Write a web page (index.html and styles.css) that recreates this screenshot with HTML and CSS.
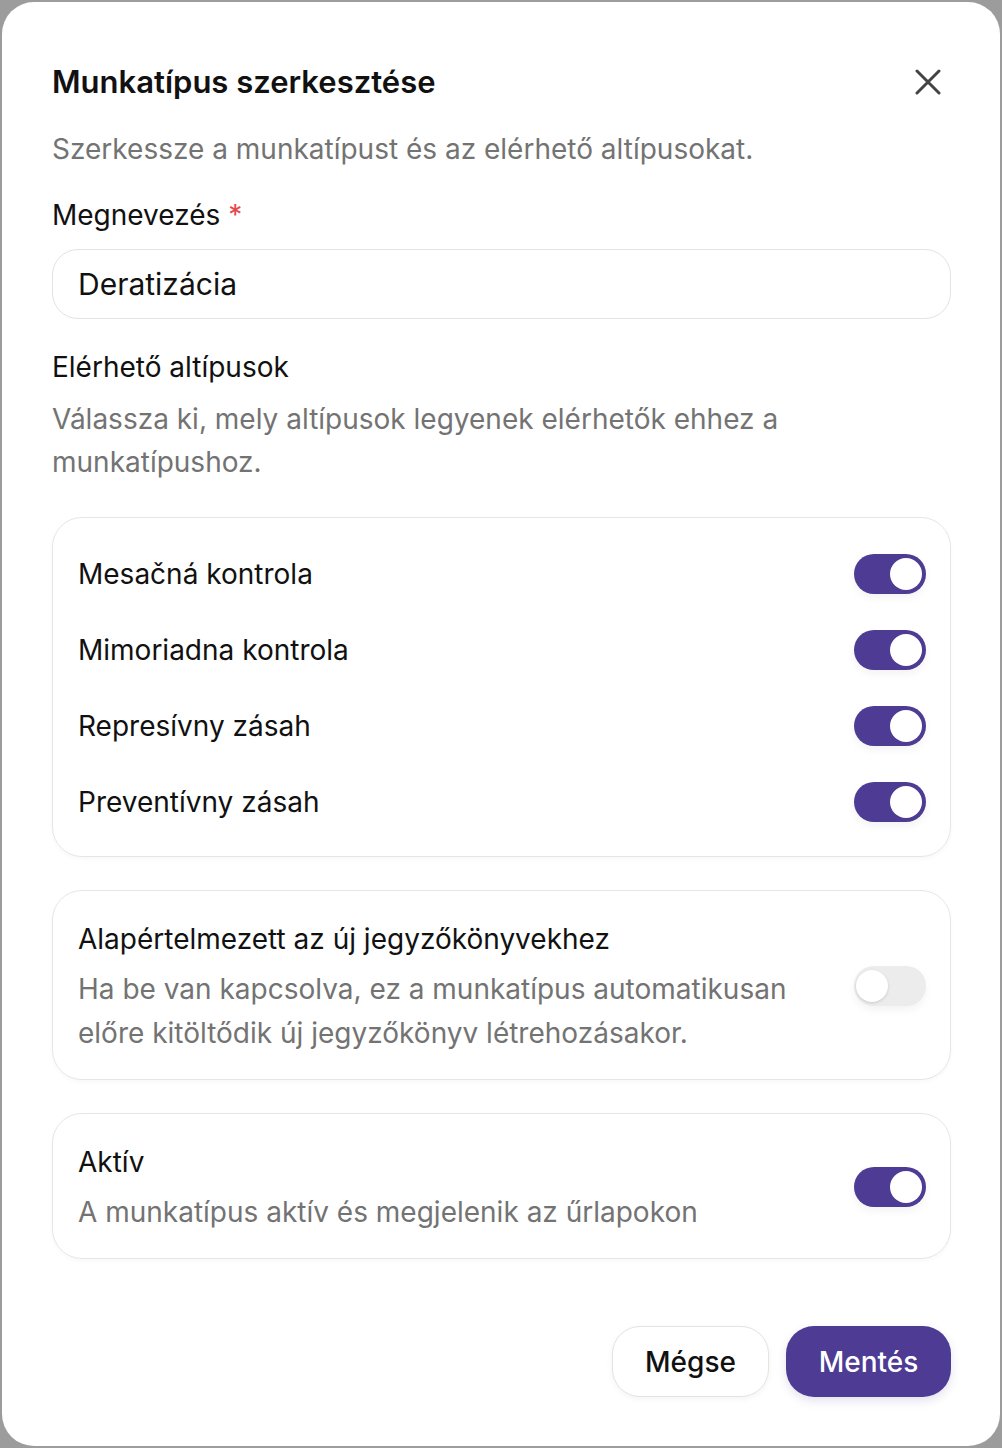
FILE: index.html
```html
<!DOCTYPE html>
<html lang="hu">
<head>
<meta charset="utf-8">
<title>Munkatípus szerkesztése</title>
<link rel="stylesheet" href="styles.css">
</head>
<body>
<div class="modal">
  <div class="header">
    <h1 class="title">Munkatípus szerkesztése</h1>
    <button class="close" aria-label="Bezárás">
      <svg width="26" height="26" viewBox="0 0 26 26"><path d="M2 2L24 24M24 2L2 24" stroke="#444" stroke-width="3" stroke-linecap="round"/></svg>
    </button>
  </div>
  <p class="subtitle">Szerkessze a munkatípust és az elérhető altípusokat.</p>

  <label class="label">Megnevezés <span class="req">*</span></label>
  <div class="input">Deratizácia</div>

  <h2 class="section">Elérhető altípusok</h2>
  <p class="section-desc">Válassza ki, mely altípusok legyenek elérhetők ehhez a munkatípushoz.</p>

  <div class="card list">
    <div class="row"><span class="row-text">Mesačná kontrola</span><span class="toggle on"><span class="knob"></span></span></div>
    <div class="row"><span class="row-text">Mimoriadna kontrola</span><span class="toggle on"><span class="knob"></span></span></div>
    <div class="row"><span class="row-text">Represívny zásah</span><span class="toggle on"><span class="knob"></span></span></div>
    <div class="row"><span class="row-text">Preventívny zásah</span><span class="toggle on"><span class="knob"></span></span></div>
  </div>

  <div class="card setting">
    <div class="setting-text">
      <div class="setting-title">Alapértelmezett az új jegyzőkönyvekhez</div>
      <div class="setting-desc">Ha be van kapcsolva, ez a munkatípus automatikusan előre kitöltődik új jegyzőkönyv létrehozásakor.</div>
    </div>
    <span class="toggle off"><span class="knob"></span></span>
  </div>

  <div class="card setting">
    <div class="setting-text">
      <div class="setting-title">Aktív</div>
      <div class="setting-desc">A munkatípus aktív és megjelenik az űrlapokon</div>
    </div>
    <span class="toggle on"><span class="knob"></span></span>
  </div>

  <div class="footer">
    <button class="btn secondary">Mégse</button>
    <button class="btn primary">Mentés</button>
  </div>
</div>
</body>
</html>
```
FILE: styles.css
```css
* { box-sizing: border-box; }
html, body { margin: 0; padding: 0; }
body {
  background: #9c9c9c;
  font-family: "Inter", "Noto Sans", sans-serif;
  color: #111;
  padding: 2px;
  height: 1448px;
  overflow: hidden;
}
.modal {
  background: #fff;
  border-radius: 32px;
  height: 1444px;
  padding: 60px 49px 49px 50px;
  display: flex;
  flex-direction: column;
}
.header {
  display: flex;
  align-items: center;
  justify-content: space-between;
}
.title {
  margin: 0;
  font-size: 31px;
  line-height: 40px;
  font-weight: 600;
}
.close {
  border: 0;
  background: none;
  padding: 0;
  margin-right: 10px;
  width: 26px;
  height: 26px;
  display: flex;
}
.subtitle {
  margin: 27px 0 0;
  font-size: 28px;
  line-height: 40px;
  color: #737373;
}
.label {
  margin-top: 26px;
  font-size: 28px;
  line-height: 40px;
  font-weight: 400;
}
.req { color: #e5484d; }
.input {
  margin-top: 14px;
  height: 70px;
  border: 1.5px solid #e3e3e3;
  border-radius: 26px;
  padding: 0 25px;
  display: flex;
  align-items: center;
  font-size: 30px;
}
.section {
  margin: 28px 0 0;
  font-size: 28px;
  line-height: 40px;
  font-weight: 400;
}
.section-desc {
  margin: 11px 0 0;
  font-size: 28px;
  line-height: 43px;
  color: #737373;
  max-width: 760px;
}
.card {
  border: 1.5px solid #e6e6e6;
  border-radius: 30px;
  box-shadow: 0 2px 4px rgba(0,0,0,0.03);
}
.list {
  margin-top: 33px;
  padding: 18px 24px 16px 25px;
}
.row {
  height: 76px;
  display: flex;
  align-items: center;
  justify-content: space-between;
}
.row-text { font-size: 28px; }
.toggle {
  width: 72px;
  height: 40px;
  border-radius: 20px;
  position: relative;
  flex: none;
  box-shadow: 0 4px 8px rgba(0,0,0,0.05);
}
.toggle.on { background: #4d3b94; }
.toggle.off { background: #ececec; }
.knob {
  position: absolute;
  top: 4px;
  width: 32px;
  height: 32px;
  border-radius: 50%;
  background: #fff;
}
.toggle.on .knob { right: 4px; }
.toggle.off .knob { left: 2px; box-shadow: 0 1px 3px rgba(0,0,0,0.15); }
.setting {
  margin-top: 33px;
  padding: 26px 24px 24px 25px;
  display: flex;
  align-items: center;
  justify-content: space-between;
  gap: 40px;
}
.setting-title {
  font-size: 28px;
  line-height: 44px;
}
.setting-desc {
  margin-top: 6px;
  font-size: 28px;
  line-height: 44px;
  color: #737373;
}
.footer {
  margin-top: auto;
  display: flex;
  justify-content: flex-end;
  gap: 17px;
}
.btn {
  height: 71px;
  border-radius: 28px;
  font-family: inherit;
  font-size: 28px;
  font-weight: 500;
  padding: 0;
}
.btn.secondary {
  width: 157px;
  background: #fff;
  border: 1.5px solid #e3e3e3;
  color: #111;
  box-shadow: 0 2px 6px rgba(0,0,0,0.05);
}
.btn.primary {
  width: 165px;
  background: #4d3b94;
  border: 0;
  color: #fff;
  box-shadow: 0 4px 10px rgba(77,59,148,0.15);
}
```
